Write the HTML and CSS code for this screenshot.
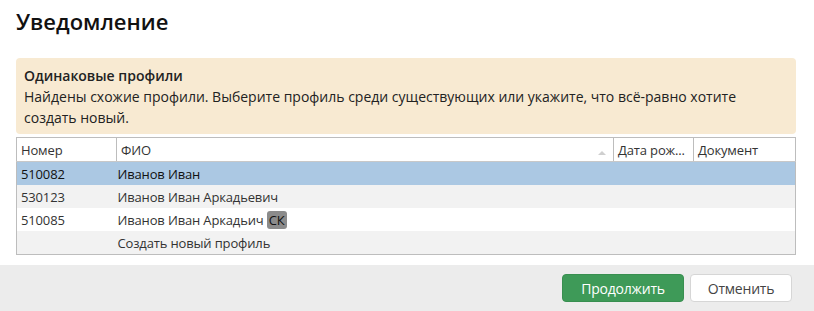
FILE: index.html
```html
<!DOCTYPE html>
<html>

<head>
  <title>Уведомление</title>
  <link rel="stylesheet" href="styles.css">
</head>

<body>
  <div class="dialog">
    <h2 class="dialog-title">Уведомление</h2>

    <div class="alert">
      <div class="alert-title">Одинаковые профили</div>
      <div class="alert-text">Найдены схожие профили. Выберите профиль среди существующих или укажите, что всё-равно хотите создать новый.</div>
    </div>

    <table class="grid">
      <tr>
        <th class="col-num">Номер</th>
        <th class="col-name">ФИО <span class="sort"></span></th>
        <th class="col-date">Дата рож...</th>
        <th class="col-doc">Документ</th>
      </tr>
      <tr class="selected">
        <td>510082</td>
        <td class="name">Иванов Иван</td>
        <td></td>
        <td></td>
      </tr>
      <tr class="alt">
        <td>530123</td>
        <td class="name">Иванов Иван Аркадьевич</td>
        <td></td>
        <td></td>
      </tr>
      <tr>
        <td>510085</td>
        <td class="name">Иванов Иван Аркадьич <span class="badge">СК</span></td>
        <td></td>
        <td></td>
      </tr>
      <tr class="alt">
        <td></td>
        <td class="name">Создать новый профиль</td>
        <td></td>
        <td></td>
      </tr>
    </table>
  </div>

  <footer class="dialog-footer">
    <button class="btn btn-primary">Продолжить</button>
    <button class="btn btn-default">Отменить</button>
  </footer>
</body>

</html>
```

FILE: styles.css
```css
/* Reset default margin and padding for body */
body {
  margin: 0;
  padding: 0;
  font-family: 'Open Sans', sans-serif;
  color: #222;
  background-color: #fff;
}

/* Dialog body */
.dialog {
  padding: 0 18px 0 16px;
  height: 265px;
  overflow: hidden;
}

.dialog-title {
  margin: 0;
  padding-top: 6px;
  font-size: 22px;
  font-weight: 600;
  line-height: 31px;
  color: #111;
}

/* Warning box */
.alert {
  margin-top: 21px;
  background-color: #f8ead2;
  border-radius: 4px;
  padding: 7px 40px 7px 8px;
  font-size: 14px;
  line-height: 21px;
  height: 62px;
}

.alert-title {
  font-weight: 600;
}

/* Table of profiles */
.grid {
  width: 100%;
  margin-top: 3px;
  border-collapse: collapse;
  border: 1px solid #bdbdbd;
  font-size: 13px;
  letter-spacing: -0.15px;
  color: #333;
  table-layout: fixed;
}

.grid th {
  text-align: left;
  font-weight: normal;
  height: 23px;
  padding: 0 4px;
  border: 1px solid #bdbdbd;
  border-bottom: 1px solid #c8c8c8;
  white-space: nowrap;
}

.grid td {
  height: 23px;
  padding: 0 4px;
}

.grid td.name {
  padding-left: 1px;
}

.col-num {
  width: 91px;
}

.col-date {
  width: 71px;
}

.col-doc {
  width: 93px;
}

/* Small sort triangle in the header */
.sort {
  float: right;
  width: 0;
  height: 0;
  margin-top: 10px;
  margin-right: 3px;
  border-left: 4px solid transparent;
  border-right: 4px solid transparent;
  border-bottom: 4px solid #cfcfcf;
}

.grid tr.selected {
  background-color: #abc8e3;
}

.grid tr.selected td {
  color: #111;
}

.grid tr.alt {
  background-color: #f2f2f2;
}

.badge {
  display: inline-block;
  background-color: #8b8b8b;
  color: #111;
  border-radius: 3px;
  padding: 0 2px;
  line-height: 18px;
}

/* Footer with buttons */
.dialog-footer {
  background-color: #ececec;
  height: 46px;
  display: flex;
  justify-content: flex-end;
  align-items: center;
  gap: 6px;
  padding-right: 22px;
}

.btn {
  font-family: 'Open Sans', sans-serif;
  font-size: 14px;
  letter-spacing: -0.2px;
  height: 28px;
  border-radius: 4px;
  cursor: pointer;
}

.btn-primary {
  width: 122px;
  background-color: #3e9a58;
  color: #fff;
  border: 1px solid #388f50;
}

.btn-default {
  width: 102px;
  background-color: #fff;
  color: #444;
  border: 1px solid #d6d6d6;
}
```
